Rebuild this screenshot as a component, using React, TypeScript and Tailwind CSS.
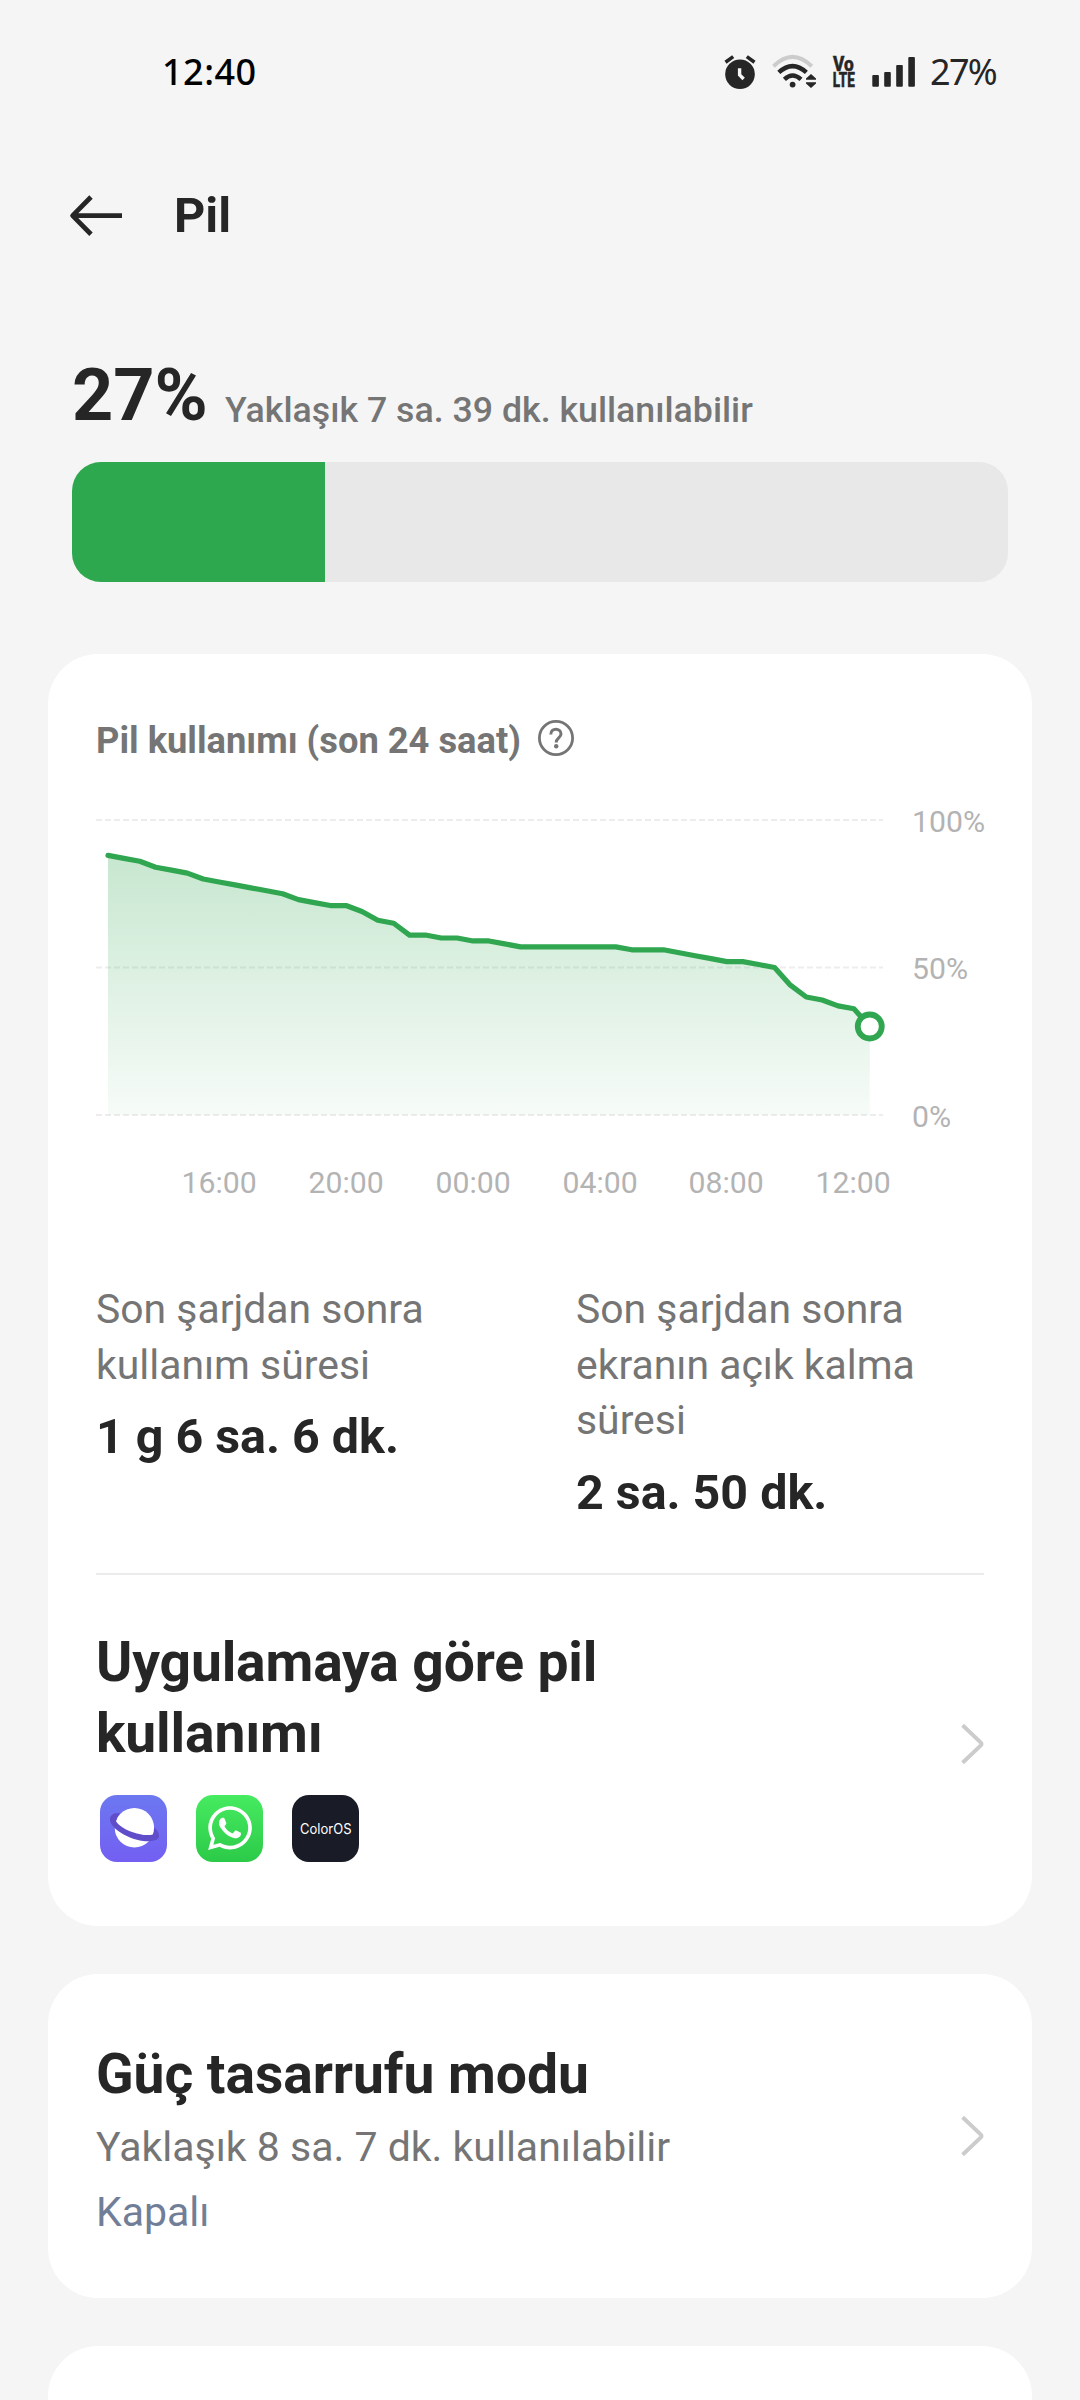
import React from "react";
import { FaWhatsapp } from "react-icons/fa";

const GREEN = "#2fa64f";

/* Battery level sampled every half hour, oldest first */
const levels = [
  88, 87, 86, 84, 83, 82, 80, 79, 78, 77, 76, 75, 73, 72, 71, 71, 69, 66, 65, 61, 61, 60, 60, 59, 59,
  58, 57, 57, 57, 57, 57, 57, 57, 56, 56, 56, 55, 54, 53, 52, 52, 51, 50, 44, 40, 39, 37, 36, 30,
];

const X0 = 12;
const STEP = 15.87;
const BASE = 355;
const px = (i: number) => X0 + i * STEP;
const py = (v: number) => BASE - v * 2.95;

const hours = [
  { label: "16:00", x: 123.2 },
  { label: "20:00", x: 250.2 },
  { label: "00:00", x: 377.2 },
  { label: "04:00", x: 504.2 },
  { label: "08:00", x: 630.2 },
  { label: "12:00", x: 757.2 },
];

function StatusIcons() {
  return (
    <svg width="196" height="40" viewBox="720 52 196 40" fill="#262626" className="block">
      {/* alarm */}
      <circle cx="740" cy="74.2" r="14.8" />
      <path d="M725.5 62.2L733.2 56.6M754.5 62.2L746.8 56.6" stroke="#262626" strokeWidth="3.6" />
      <path d="M739.6 68.2V74.8L743.6 79" stroke="#f5f5f5" strokeWidth="3.4" fill="none" />
      {/* wifi */}
      <g fill="none" strokeWidth="4">
        <path d="M773.5 66.2Q792.5 47.5 811.8 66.2" stroke="#cccccc" />
        <path d="M778.8 72.4Q792.5 59.8 806.4 72.4" stroke="#262626" strokeWidth="4.4" />
        <path d="M784.4 79.4Q792.5 71.6 801 79.4" stroke="#262626" strokeWidth="4.4" />
      </g>
      <circle cx="792.6" cy="84.6" r="2.9" />
      <path d="M811 74l5 4.6v1.1h-10v-1.1zM811 88l5-4.6v-1.1h-10v1.1z" />
      {/* VoLTE */}
      <g className="font-['Roboto',sans-serif] text-[19.6px] font-extrabold" stroke="#262626" strokeWidth="0.5">
        <text transform="translate(833 70.8) scale(0.88 1)">Vo</text>
        <text transform="translate(832.8 86.6) scale(0.69 1)">LTE</text>
      </g>
      {/* signal */}
      <rect x="872.3" y="75" width="6.6" height="11.8" rx="1" />
      <rect x="884.2" y="72" width="6.6" height="14.8" rx="1" />
      <rect x="896.2" y="65" width="6.6" height="21.8" rx="1" />
      <rect x="908.3" y="57" width="6.6" height="29.8" rx="1" />
    </svg>
  );
}

function StatusBar() {
  return (
    <div className="flex h-[144px] items-center justify-between pl-[162px] font-['Noto_Sans',sans-serif] text-[36px]">
      <span className="font-medium tracking-[0.5px] text-black">12:40</span>
      <div className="flex w-[360px] items-center text-[#262626]">
        <StatusIcons />
        <span className="ml-[14px] font-[450] tracking-[-1.7px]">27%</span>
      </div>
    </div>
  );
}

function Chevron() {
  return (
    <svg width="24" height="42" viewBox="0 0 24 42" fill="none" className="shrink-0">
      <path d="M2.6 2.2L20.6 19.4Q22.2 21 20.6 22.6L2.6 39.8" stroke="#cccccc" strokeWidth="4" />
    </svg>
  );
}

function Chart() {
  const line = levels.map((v, i) => `${px(i)},${py(v)}`).join(" ");
  const last = levels.length - 1;
  return (
    <svg width="888" height="450" viewBox="0 0 888 450" className="block overflow-visible">
      <defs>
        <linearGradient id="fade" x1="0" y1="95" x2="0" y2="355" gradientUnits="userSpaceOnUse">
          <stop offset="0" stopColor={GREEN} stopOpacity="0.27" />
          <stop offset="1" stopColor={GREEN} stopOpacity="0.04" />
        </linearGradient>
      </defs>
      {[60, 207.5, 355].map((y) => (
        <line key={y} x1="0" x2="787" y1={y} y2={y} stroke="#ededed" strokeWidth="2" strokeDasharray="6 3" />
      ))}
      <polygon points={`${px(0)},${BASE} ${line} ${px(last)},${BASE}`} fill="url(#fade)" />
      <polyline points={line} fill="none" stroke={GREEN} strokeWidth="5.2" strokeLinejoin="round" strokeLinecap="round" />
      <circle cx={px(last)} cy={py(levels[last])} r="12" fill="#fff" stroke={GREEN} strokeWidth="5.8" />
      <g fill="#b3b3b3" className="font-['Roboto',sans-serif] text-[30.2px] font-normal">
        <text x="816" y="72">100%</text>
        <text x="816" y="219.3">50%</text>
        <text x="816" y="367">0%</text>
        {hours.map((h) => (
          <text key={h.label} x={h.x} y="433.2" textAnchor="middle">{h.label}</text>
        ))}
      </g>
    </svg>
  );
}

function PlanetIcon() {
  return (
    <svg width="67" height="67" viewBox="0 0 67 67" className="block rounded-[17px]">
      <defs>
        <linearGradient id="planet" x1="0" y1="0" x2="0" y2="1">
          <stop offset="0" stopColor="#6c78f0" />
          <stop offset="1" stopColor="#735ff2" />
        </linearGradient>
      </defs>
      <rect width="67" height="67" fill="url(#planet)" />
      <circle cx="34.4" cy="32.8" r="19.7" fill="#fff" />
      <path d="M20 18C12.5 17.5 9.4 21 10 25.5C11 33 27 44 43 46C53 47 60 45 59 40C58.7 37.5 57 34.5 54 32.5Q54.4 37 52.8 39.6C43 42 22 35.5 16 26.2Q17.4 21 20 18Z" fill="#604dca" />
    </svg>
  );
}

function WhatsAppIcon() {
  return (
    <div className="flex size-[67px] items-center justify-center rounded-[17px] bg-linear-to-b from-[#46eb60] to-[#2bca48] pb-[1px] pl-[1px]">
      <FaWhatsapp className="size-[50px] text-white" />
    </div>
  );
}

function ColorOSIcon() {
  return (
    <svg width="67" height="67" viewBox="0 0 67 67" className="block rounded-[17px]">
      <rect width="67" height="67" fill="#191b26" />
      <text x="8" y="39" fill="#fff" className="font-['Inter',sans-serif] text-[14px]" textLength="51.5" lengthAdjust="spacingAndGlyphs">ColorOS</text>
    </svg>
  );
}

function Stat({ lines, value }: { lines: string[]; value: string }) {
  return (
    <div className="w-[480px] shrink-0">
      <div className="text-[40.9px] leading-[55.5px] text-[#757575]">
        {lines.map((l) => (
          <div key={l}>{l}</div>
        ))}
      </div>
      <div className="mt-[16px] text-[48.4px] leading-[56px] font-bold">{value}</div>
    </div>
  );
}

export default function App() {
  return (
    <div className="flex h-[2400px] w-[1080px] flex-col overflow-hidden bg-[#f5f5f5] font-['Roboto',sans-serif] text-[#262626]">
      <StatusBar />

      <header className="flex h-[143px] items-center pl-[69px]">
        <svg width="54" height="42" viewBox="0 0 54 42" fill="none" stroke="#262626" strokeWidth="4.8">
          <path d="M22 2L3.6 20.6L22 39.2M3.6 20.6H53" strokeLinejoin="round" />
        </svg>
        <h1 className="ml-[51px] text-[48.6px] leading-[56px] font-bold">Pil</h1>
      </header>

      <section className="px-[72px]">
        <div className="flex h-[175px] items-end pb-[30px]">
          <span className="w-[134px] text-[72px] leading-[72px] font-bold">27%</span>
          <span className="mb-[4px] ml-[19px] text-[35.7px] leading-[36px] font-medium text-[#757575]">
            Yaklaşık 7 sa. 39 dk. kullanılabilir
          </span>
        </div>
        <div className="h-[120px] overflow-hidden rounded-[29px] bg-[#e8e8e8]">
          <div className="h-full w-[27%] bg-[#2da84f]" />
        </div>
      </section>

      <section className="mx-[48px] mt-[72px] h-[1272px] shrink-0 rounded-[50px] bg-white px-[48px] pt-[66px]">
        <div className="flex h-[40px] items-center">
          <h2 className="w-[424px] pt-[2px] text-[36.3px] leading-[40px] font-bold whitespace-nowrap text-[#757575]">Pil kullanımı (son 24 saat)</h2>
          <svg width="38" height="38" viewBox="0 0 38 38" fill="none" stroke="#757575" strokeWidth="2.8" className="-mt-[4px] ml-[17px]">
            <circle cx="19" cy="19" r="16.6" />
            <path d="M13.8 15.4C13.8 8.4 24 8.6 24 15C24 18.8 19.2 19 19.2 23.4" strokeWidth="3" />
            <circle cx="19.2" cy="27.2" r="2.2" fill="#757575" stroke="none" />
          </svg>
        </div>
        <Chart />

        <div className="mt-[72px] flex h-[240px]">
          <Stat lines={["Son şarjdan sonra", "kullanım süresi"]} value="1 g 6 sa. 6 dk." />
          <Stat lines={["Son şarjdan sonra", "ekranın açık kalma", "süresi"]} value="2 sa. 50 dk." />
        </div>
        <div className="mt-[51px] h-[2px] bg-[#ebebeb]" />

        <div className="mt-[52px] flex items-center justify-between">
          <div>
            <h2 className="text-[55.2px] leading-[71px] font-bold tracking-[-0.15px]">
              Uygulamaya göre pil
              <br />
              kullanımı
            </h2>
            <div className="mt-[26px] ml-[4px] flex gap-[29px]">
              <PlanetIcon />
              <WhatsAppIcon />
              <ColorOSIcon />
            </div>
          </div>
          <div className="-mt-[2px]">
            <Chevron />
          </div>
        </div>
      </section>

      <section className="mx-[48px] mt-[48px] flex h-[324px] shrink-0 items-center justify-between rounded-[50px] bg-white px-[48px]">
        <div className="pt-[14px]">
          <h2 className="text-[55.2px] leading-[66px] font-bold tracking-[-0.05px]">Güç tasarrufu modu</h2>
          <p className="mt-[8px] text-[41px] leading-[65px] text-[#757575]">Yaklaşık 8 sa. 7 dk. kullanılabilir</p>
          <p className="text-[41px] leading-[65px] text-[#717e98]">Kapalı</p>
        </div>
        <Chevron />
      </section>

      <section className="mx-[48px] mt-[48px] h-[54px] shrink-0 overflow-hidden">
        <div className="h-[200px] rounded-[50px] bg-white" />
      </section>
    </div>
  );
}
